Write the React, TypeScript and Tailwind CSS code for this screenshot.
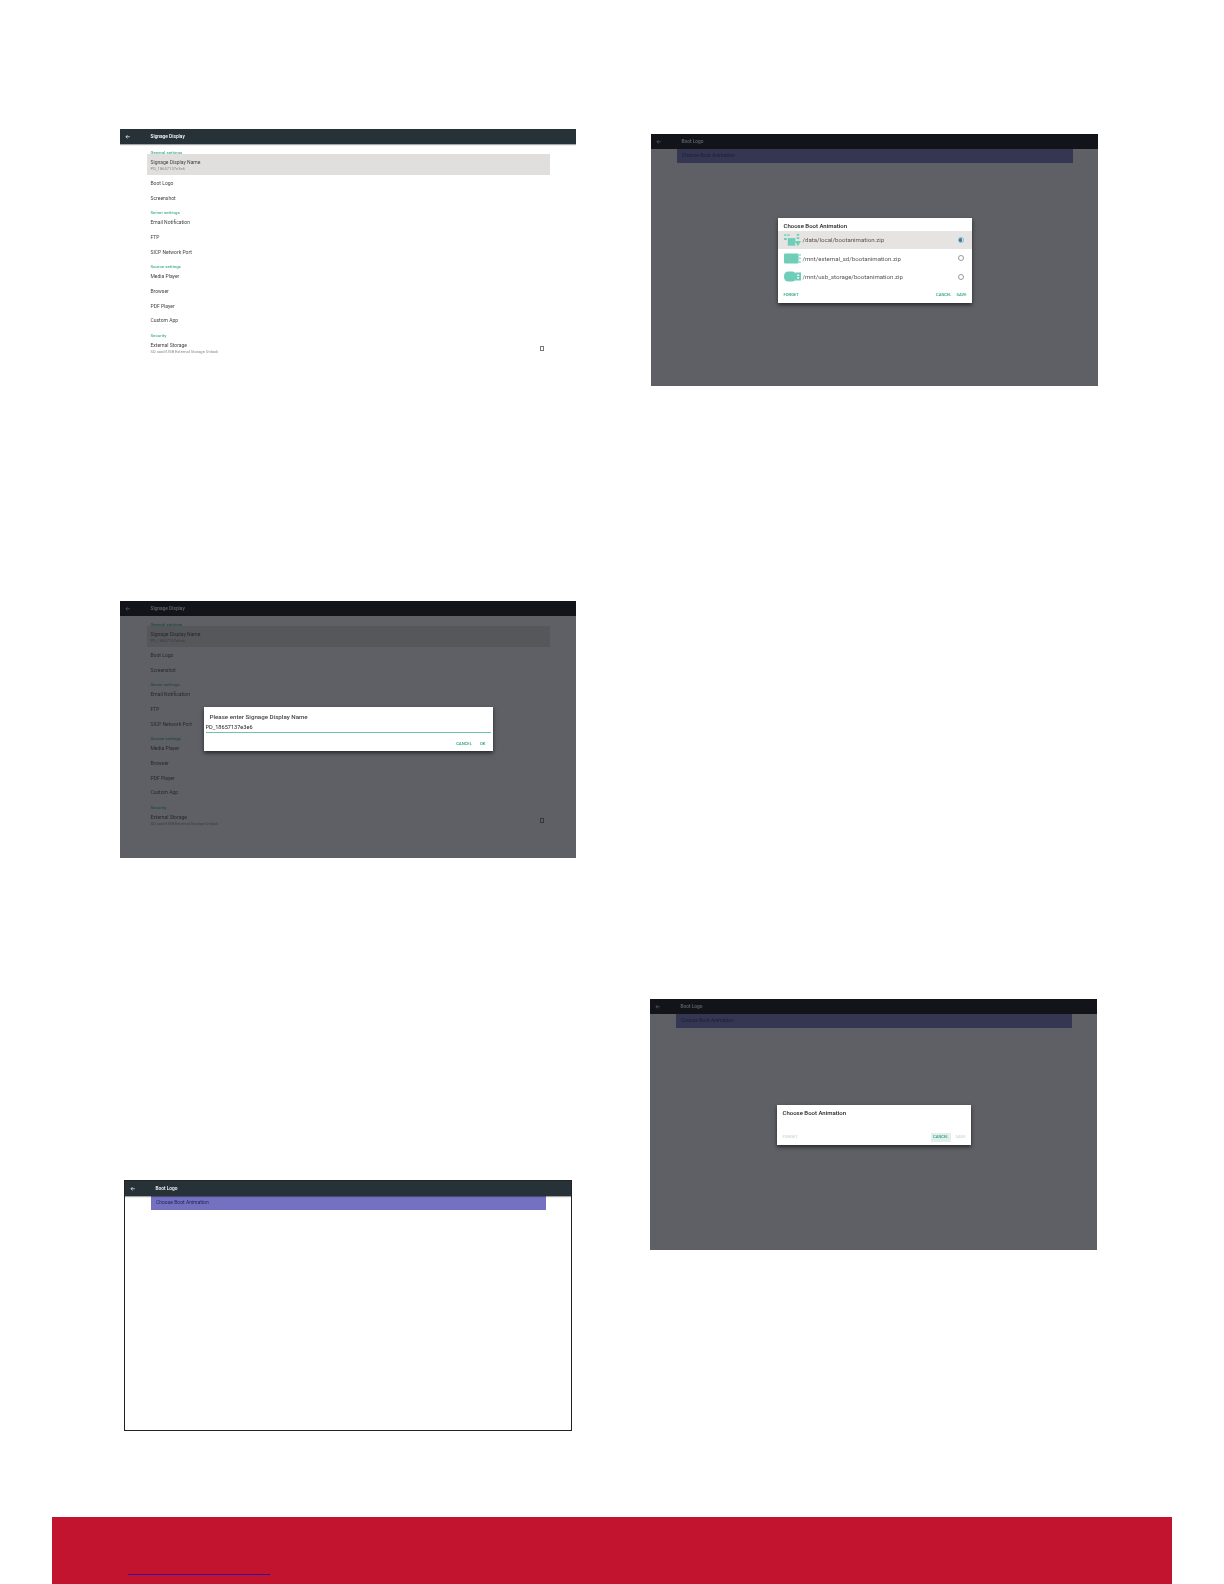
const sections = [
  { title: "General settings", rows: [{ name: "Signage Display Name", sub: "PD_18657137e3e6", active: true }, { name: "Boot Logo" }, { name: "Screenshot" }] },
  { title: "Server settings", rows: [{ name: "Email Notification" }, { name: "FTP" }, { name: "SICP Network Port" }] },
  { title: "Source settings", rows: [{ name: "Media Player" }, { name: "Browser" }, { name: "PDF Player" }, { name: "Custom App" }] },
  { title: "Security", rows: [{ name: "External Storage", sub: "SD card/USB External Storage Unlock", check: true }] },
];

function Header({ title, dim }: { title: string; dim?: boolean }) {
  return (
    <div className={`relative z-10 flex h-[15px] shrink-0 items-center text-white ${dim ? "bg-black" : "bg-[#263238] shadow-[0_1px_1px_rgba(0,0,0,0.35)]"}`}>
      <svg viewBox="0 0 24 24" className="ml-[4.5px] h-[5.5px] w-[5.5px]" fill="none" stroke="currentColor" strokeWidth="3">
        <path d="M21 12H4M11 5l-7 7 7 7" />
      </svg>
      <span className="ml-[20.5px] pt-[1px] text-[4.8px] font-medium">{title}</span>
    </div>
  );
}

function SettingsList() {
  return (
    <div className="ml-[27px] mr-[26px] flex flex-col">
      {sections.map((s) => (
        <div key={s.title} className="flex flex-col">
          <div className="flex h-[10px] items-end pl-[3.5px] text-[4.4px] leading-[2px] text-[#1f9a78]">{s.title}</div>
          {s.rows.map((r) => (
            <div
              key={r.name}
              className={`relative flex flex-col justify-center pl-[3.5px] pr-[5px] pt-[1px] text-[#444] ${r.sub ? "h-[21px]" : "h-[14.7px]"} ${r.active ? "bg-[#e0dfdd]" : ""}`}
            >
              <div className="text-[5px] leading-[6px]">{r.name}</div>
              {r.sub && <div className="mt-[1px] text-[4.1px] leading-[5px] text-[#888]">{r.sub}</div>}
              {r.check && <div className="absolute right-[6px] top-[9px] h-[5px] w-[4px] border-[0.6px] border-[#777]" />}
            </div>
          ))}
        </div>
      ))}
    </div>
  );
}

function Purple() {
  return (
    <div className="ml-[26px] mr-[25.5px] flex h-[14px] shrink-0 items-center bg-[#7472c0] pl-[5px] text-[5px] text-[#26235c]">
      Choose Boot Animation
    </div>
  );
}

function Scrim({ children }: { children: React.ReactNode }) {
  return (
    <div className="absolute inset-0 z-20 flex items-center justify-center bg-[#1a1d24]/70">{children}</div>
  );
}

function DiskIcon({ kind }: { kind: number }) {
  if (kind === 0) {
    return (
      <svg viewBox="0 0 18 14" className="h-[14px] w-[17px] shrink-0 text-[#6fcdb8]" fill="currentColor">
        <rect x="0" y="1" width="2.5" height="1.5" />
        <rect x="3.5" y="1" width="2.5" height="1.5" />
        <rect x="0" y="5" width="3" height="2" />
        <rect x="4" y="5" width="8" height="8" />
        <rect x="13.5" y="0.5" width="2.6" height="2" />
        <rect x="13.5" y="4" width="2.6" height="2" />
        <path d="M11.5 8H18l-3.2 5.5z" />
      </svg>
    );
  }
  return (
    <svg viewBox="0 0 18 11" className="h-[11px] w-[17px] shrink-0 text-[#6fcdb8]" fill="currentColor" preserveAspectRatio="none">
      {kind === 1 ? (
        <>
          <rect x="0" y="0.5" width="15.5" height="10" rx="1.2" />
          <rect x="16.2" y="1" width="1.4" height="1.8" />
          <rect x="16.2" y="4.5" width="1.4" height="1.8" />
          <rect x="16.2" y="8" width="1.4" height="1.8" />
        </>
      ) : (
        <>
          <rect x="0" y="0.5" width="13" height="10" rx="4.5" />
          <rect x="12" y="1.5" width="6" height="8" />
          <rect x="14" y="3.5" width="2" height="1.4" fill="#fff" />
          <rect x="14" y="6.2" width="2" height="1.4" fill="#fff" />
        </>
      )}
    </svg>
  );
}

function Radio({ on }: { on?: boolean }) {
  return (
    <div className={`flex h-[6px] w-[6px] items-center justify-center rounded-full border-[0.5px] ${on ? "border-[#8fb8cc]" : "border-[#999]"}`}>
      {on && <div className="h-[3.8px] w-[3.8px] shrink-0 rounded-full bg-[#2f7fa8]" />}
    </div>
  );
}

function Screen({ h, border, children }: { h: string; border?: boolean; children: React.ReactNode }) {
  return (
    <div className={`relative flex flex-col overflow-hidden bg-white blur-[0.3px] ${h} ${border ? "border border-[#222]" : ""}`}>
      {children}
    </div>
  );
}

const paths = ["/data/local/bootanimation.zip", "/mnt/external_sd/bootanimation.zip", "/mnt/usb_storage/bootanimation.zip"];

export default function App() {
  return (
    <div className="flex h-[1584px] w-[1224px] flex-col bg-white font-['Roboto',sans-serif]">
      <div className="flex h-[1517px] shrink-0 pl-[120px]">
        <div className="flex w-[456px] flex-col">
          <div className="mt-[129px]">
            <Screen h="h-[232px]">
              <Header title="Signage Display" />
              <SettingsList />
            </Screen>
          </div>
          <div className="mt-[240px]">
            <Screen h="h-[257px]">
              <Header title="Signage Display" dim />
              <SettingsList />
              <Scrim>
                <div className="mb-[2px] flex h-[44px] w-[289px] flex-col bg-white shadow-[0_2px_4px_rgba(0,0,0,0.6)]">
                  <div className="pl-[6px] pt-[6px] text-[6.2px] font-medium leading-[8px] text-[#444]">Please enter Signage Display Name</div>
                  <div className="mx-[2px] mt-[2px] border-b-[0.7px] border-[#6fc4ac] text-[5.6px] leading-[9px] text-[#222]">PD_18657137e3e6</div>
                  <div className="mt-[8px] flex justify-end gap-[8px] pr-[7px] text-[4.2px] font-medium leading-[6px] text-[#26a17f]">
                    <span>CANCEL</span>
                    <span>OK</span>
                  </div>
                </div>
              </Scrim>
            </Screen>
          </div>
          <div className="ml-[4px] mt-[322px] w-[448px]">
            <Screen h="h-[251px]" border>
              <Header title="Boot Logo" />
              <Purple />
            </Screen>
          </div>
        </div>
        <div className="ml-[75px] flex w-[447px] flex-col">
          <div className="mt-[134px]">
            <Screen h="h-[252px]">
              <Header title="Boot Logo" dim />
              <Purple />
              <Scrim>
                <div className="flex h-[85px] w-[194px] flex-col bg-white shadow-[0_2px_4px_rgba(0,0,0,0.6)]">
                  <div className="h-[13px] pl-[6px] pt-[4px] text-[6px] font-medium leading-[8px] text-[#222]">Choose Boot Animation</div>
                  {paths.map((p, i) => (
                    <div key={p} className={`flex h-[18.6px] items-center pl-[6px] pr-[8px] ${i === 0 ? "bg-[#e6e4e2]" : ""}`}>
                      <div className="flex w-[19px] justify-start">
                        <DiskIcon kind={i} />
                      </div>
                      <span className="flex-1 text-[6.1px] text-[#555]">{p}</span>
                      <Radio on={i === 0} />
                    </div>
                  ))}
                  <div className="mt-[6px] flex items-center gap-[5px] pl-[6px] pr-[5px] text-[4.1px] font-medium leading-[6px] text-[#26a17f]">
                    <span className="flex-1">FORGET</span>
                    <span>CANCEL</span>
                    <span>SAVE</span>
                  </div>
                </div>
              </Scrim>
            </Screen>
          </div>
          <div className="-ml-[1px] mt-[613px] w-[447px]">
            <Screen h="h-[251px]">
              <Header title="Boot Logo" dim />
              <Purple />
              <Scrim>
                <div className="flex h-[40px] w-[194px] flex-col bg-white shadow-[0_2px_4px_rgba(0,0,0,0.6)]">
                  <div className="h-[28px] pl-[6px] pt-[4px] text-[6px] font-medium leading-[8px] text-[#222]">Choose Boot Animation</div>
                  <div className="flex items-center gap-[5px] pl-[6px] pr-[5px] text-[4.1px] font-medium text-[#c9d6d2]">
                    <span className="flex-1">FORGET</span>
                    <span className="flex h-[9px] items-center bg-[#e3efeb] px-[2px] text-[#26a17f]">CANCEL</span>
                    <span>SAVE</span>
                  </div>
                </div>
              </Scrim>
            </Screen>
          </div>
        </div>
      </div>
      <div className="ml-[52px] flex h-[67px] w-[1120px] flex-col bg-[#c2132f] pl-[76px]">
        <div className="mt-[57px] h-[1px] w-[142px] bg-[#3a0f9c]" />
      </div>
    </div>
  );
}
